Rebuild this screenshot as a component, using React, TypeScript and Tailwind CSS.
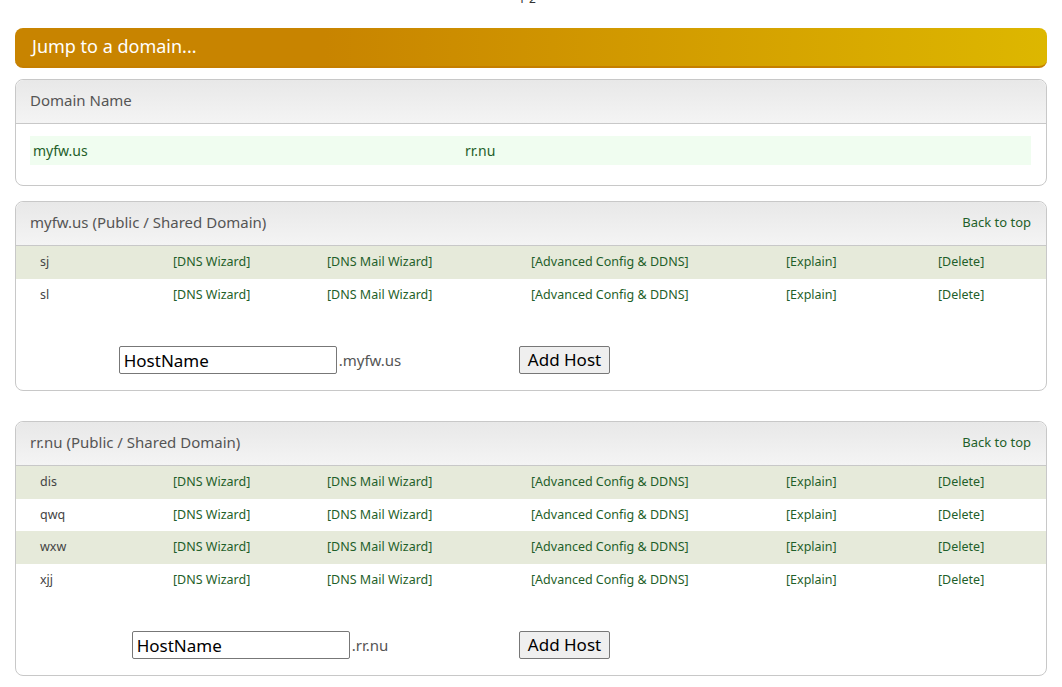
type Host = string;

const domains: { name: string; hosts: Host[] }[] = [
  { name: "myfw.us", hosts: ["sj", "sl"] },
  { name: "rr.nu", hosts: ["dis", "qwq", "wxw", "xjj"] },
];

const actions = ["[DNS Wizard]", "[DNS Mail Wizard]", "[Advanced Config & DDNS]", "[Explain]", "[Delete]"];

function CardHeader({ title, backLink }: { title: string; backLink?: boolean }) {
  return (
    <div className="flex h-[44px] items-center justify-between rounded-t-[8px] border-b border-[#c8c8c8] bg-gradient-to-b from-[#e8e8e8] to-[#f4f4f4] pb-[2px] pl-[14px] pr-[15px]">
      <span className="text-[15px] text-[#555]">{title}</span>
      {backLink && <a className="text-[13px] text-[#1f5f2a]">Back to top</a>}
    </div>
  );
}

function DomainCard({ name, hosts, last }: { name: string; hosts: Host[]; last?: boolean }) {
  return (
    <div className={`rounded-[8px] border border-[#c8c8c8] bg-white ${last ? "mt-[30px]" : "mt-[15px]"}`}>
      <CardHeader title={`${name} (Public / Shared Domain)`} backLink />
      <div>
        {hosts.map((h, i) => (
          <div
            key={h}
            className={`grid items-center pl-[24px] text-[12.5px] ${i % 2 === 0 ? "h-[33px] bg-[#e6eada]" : "h-[32px] bg-white"} grid-cols-[133px_154px_204px_255px_152px_1fr]`}
          >
            <span className="text-[#444]">{h}</span>
            {actions.map((a) => (
              <a key={a} className="text-[#1f5f2a]">
                {a}
              </a>
            ))}
          </div>
        ))}
      </div>
      <div className="flex items-center pt-[35px] pb-[16px]">
        <div className="flex w-[488px] items-center justify-center">
          <input
            defaultValue="HostName"
            className="h-[28px] w-[218px] rounded-[2px] border border-[#777] px-[4px] text-[17px] text-black"
          />
          <span className="ml-[2px] text-[15px] text-[#555]">.{name}</span>
        </div>
        <button className="ml-[15px] h-[28px] w-[91px] rounded-[2px] border border-[#777] bg-[#efefef] text-[17px] text-black">
          Add Host
        </button>
      </div>
    </div>
  );
}

export default function App() {
  return (
    <div className="min-h-screen bg-white px-[15px] pb-[10px] font-['Noto_Sans',sans-serif]">
      <div className="flex h-[28px] justify-center overflow-hidden">
        <span className="-mt-[8px] mr-[8px] text-[12px] leading-[14px] text-[#333]">1-2</span>
      </div>

      <div className="flex h-[40px] items-center rounded-[8px] border-b-2 border-[#c57f00] bg-gradient-to-r from-[#c88400] from-30% to-[#ddb700] pb-[1px] pl-[17px]">
        <span className="text-[18px] text-white">Jump to a domain...</span>
      </div>

      <div className="mt-[11px] rounded-[8px] border border-[#c8c8c8] bg-white">
        <CardHeader title="Domain Name" />
        <div className="pl-[14px] pr-[15px] pt-[12px] pb-[20px]">
          <div className="grid h-[29px] grid-cols-[432px_1fr] items-center bg-[#f0fdf0] pl-[3px] text-[14px] text-[#1f5f2a]">
            <a>myfw.us</a>
            <a>rr.nu</a>
          </div>
        </div>
      </div>

      {domains.map((d, i) => (
        <DomainCard key={d.name} name={d.name} hosts={d.hosts} last={i === 1} />
      ))}
    </div>
  );
}
